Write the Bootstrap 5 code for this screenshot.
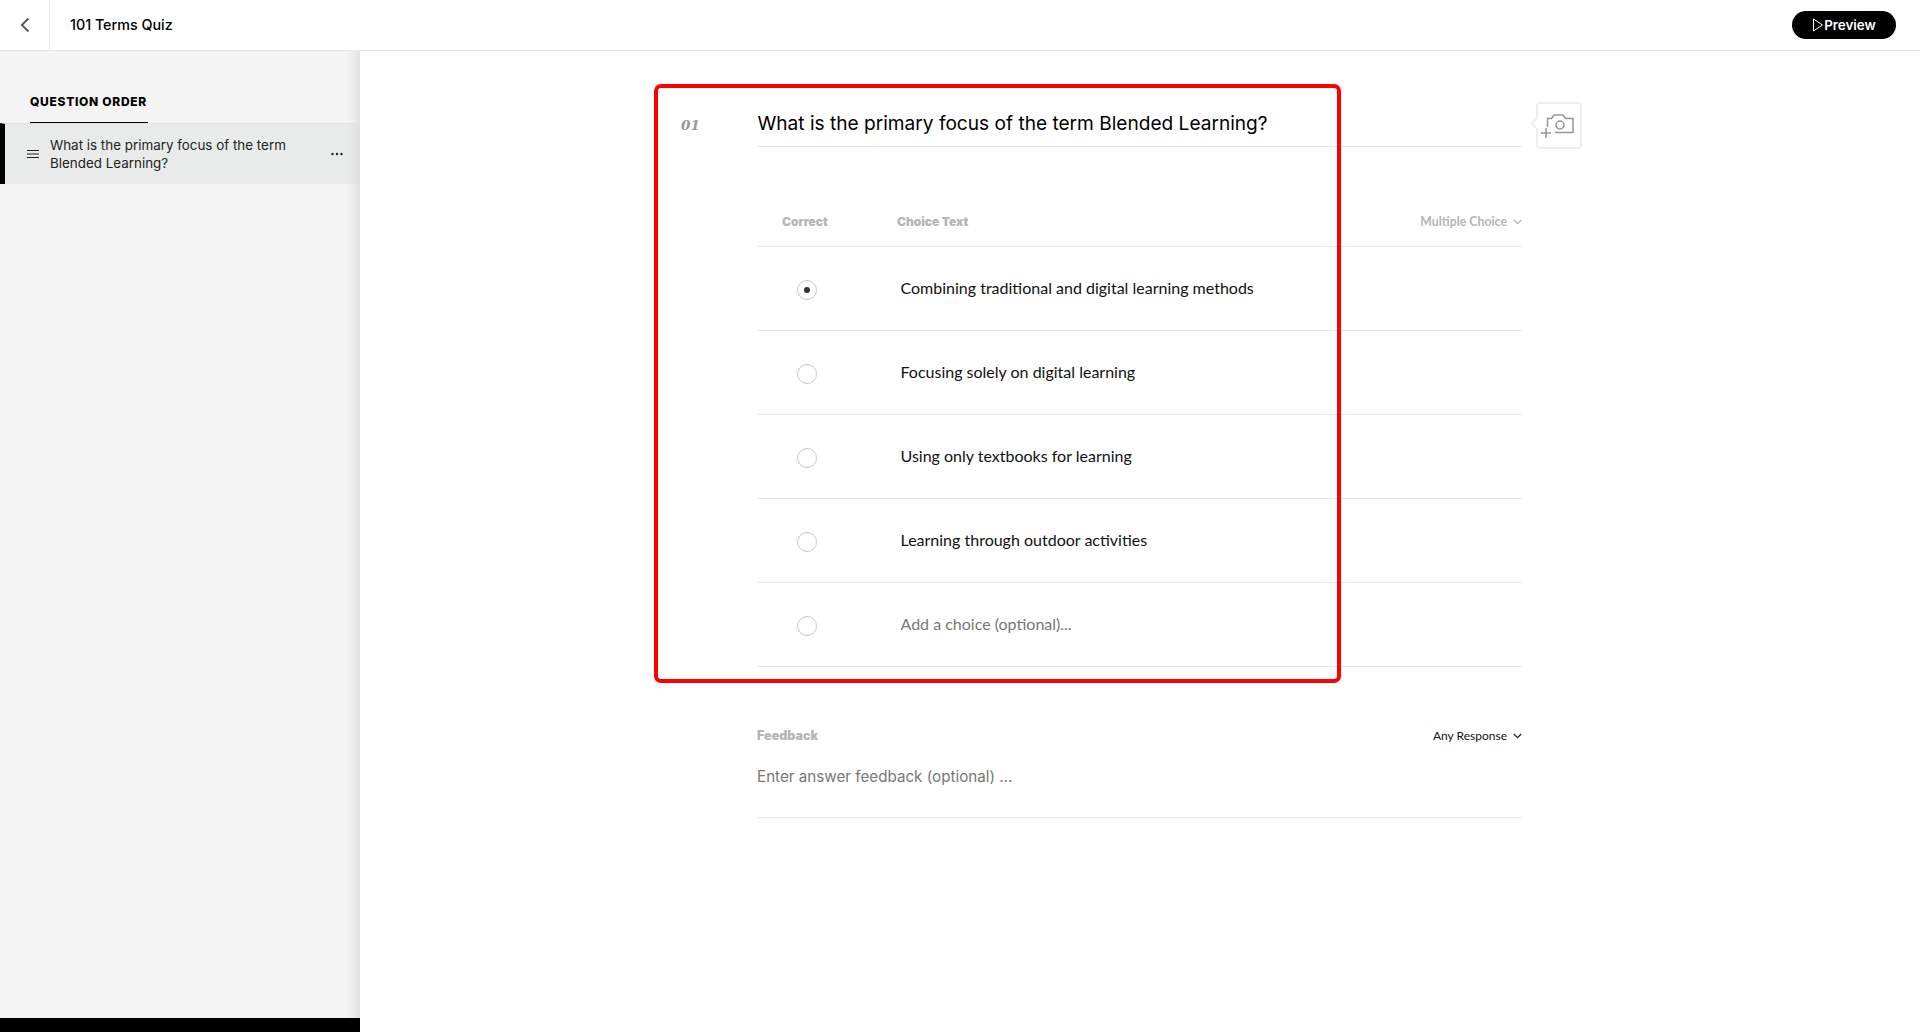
<!DOCTYPE html>
<html lang="en"><head><meta charset="utf-8"><title>101 Terms Quiz</title>
<link href="https://cdn.jsdelivr.net/npm/bootstrap@5.3.0/dist/css/bootstrap.min.css" rel="stylesheet">
<style>
html,body{height:100%;overflow:hidden}
body{font-family:Inter,"Liberation Sans",sans-serif;color:#000;background:#fff}
.shell{height:1032px}
.topbar{height:51px;border-bottom:1px solid #e9e9e9;flex:none}
.backcell{width:50px;height:50px;border-right:1px solid #e9e9e9;color:#555}
.quiz-title{font-size:14.3px;font-weight:500;margin-left:20px}
.preview-btn{width:104px;height:28px;border-radius:14px;background:#000;color:#fff;font-size:13.4px;font-weight:600;padding:2px 0 0;margin-right:24px;gap:0;line-height:1}
.preview-btn:hover{background:#000;color:#fff}
.preview-btn svg{margin-top:-2px}
.sidepanel{width:360px;background:#f4f4f4;flex:none;box-shadow:inset -14px 0 12px -10px #dcdcdc}
.side-head{font-size:12px;font-weight:800;letter-spacing:.7px;padding:44px 0 0 30px;height:72px}
.side-head span{display:block;width:118px;height:29px;border-bottom:2px solid #000;line-height:14px;white-space:nowrap}
.qitem{height:61px;background:#e9eaea;border-left:5px solid #000;border-top:1px solid #e2e2e2;box-shadow:inset -14px 0 12px -10px #dcdcdc;padding:0 17px 0 22px;font-size:13.4px;line-height:18px;color:#222}
.qitem-text{width:250px;margin-left:11px;margin-top:-1px}
.side-foot{height:14px;background:#000;width:360px;flex:none}
.workarea{position:relative;margin-left:-360px;padding-left:757px}
.redframe{position:absolute;left:654px;top:33px;width:687px;height:599px;border:4px solid #f00;border-radius:7px;pointer-events:none}
.qcol{width:765px;position:relative}
.qnum{position:absolute;left:-76px;top:65px;font-family:"DejaVu Serif","Liberation Serif",serif;font-style:italic;font-weight:700;font-size:13.5px;color:#999;line-height:18px}
.qtext{font-size:19.1px;line-height:24px;height:96px;padding-top:60px;padding-left:.5px;border-bottom:1px solid #e9e9e9;box-sizing:border-box}
.headrow{height:100px;border-bottom:1px solid #e9e9e9;padding-bottom:17px;color:#b5b5b5;font-size:12px;font-weight:900;line-height:14px}
.col-correct{width:140px;padding-left:25px;flex:none}
.col-choice{flex:1 1 auto}
.typepick{font-family:Lato,sans-serif;font-weight:700;color:#b5b5b5;font-size:12.3px;gap:6px}
.choice{height:84px;border-bottom:1px solid #e9e9e9;font-family:Lato,sans-serif;font-size:16px;color:#111}
.choice-label{margin-top:-2px}
.radiocell{width:143.500px;flex:none;padding-left:40px}
.radiodot{width:20px;height:20px;border:1px solid #c9c9c9;border-radius:50%;background:#fff;margin-top:2px}
.radiodot i{width:6px;height:6px;border-radius:50%;background:#333;display:block}
.ph{color:#777}
.fbhead{margin-top:61px;height:16px;font-size:12.500px;line-height:16px}
.fblabel{color:#b5b5b5;font-weight:900}
.anyresp{font-family:Lato,sans-serif;color:#111;font-size:12px;gap:6px}
.fbinput{height:70px;padding-top:19px;font-size:15.200px;line-height:20px;color:#777;border-bottom:1px solid #e9e9e9;box-sizing:border-box;margin-top:4px}
.cambox{position:absolute;left:779px;top:51px;width:46px;height:47px;border:2px solid #eee;border-radius:4px;background:#fff}
.cambox::before{content:"";position:absolute;left:-6px;top:15px;width:9px;height:9px;background:#fff;border-left:2px solid #eee;border-bottom:2px solid #eee;transform:rotate(45deg)}
.cambox svg{overflow:visible}
</style></head>
<body>
<div class="shell d-flex flex-column">
  <header class="topbar d-flex align-items-center">
    <div class="backcell d-flex align-items-center justify-content-center">
      <svg width="12" height="16" viewBox="0 0 12 16" fill="none" stroke="#555" stroke-width="1.8"><path d="M9.5 1.5 2.8 8l6.7 6.5"/></svg>
    </div>
    <div class="quiz-title">101 Terms Quiz</div>
    <button class="btn preview-btn d-flex align-items-center justify-content-center ms-auto" type="button">
      <svg width="12" height="14" viewBox="0 0 12 14" fill="none" stroke="#fff" stroke-width="1"><path d="M1.500 1v12l9-6z"/></svg>Preview
    </button>
  </header>
  <div class="d-flex flex-grow-1" style="min-height:0">
    <aside class="sidepanel d-flex flex-column">
      <div class="side-head"><span>QUESTION ORDER</span></div>
      <div class="qitem d-flex align-items-center">
        <svg class="flex-shrink-0" width="12" height="8" viewBox="0 0 12 8" stroke="#222" stroke-width="1"><path d="M0 .5h12M0 4h12M0 7.500h12"/></svg>
        <div class="qitem-text">What is the primary focus of the term Blended Learning?</div>
        <svg class="ms-auto flex-shrink-0" width="12" height="4" viewBox="0 0 12 4" fill="#222"><circle cx="1.500" cy="2" r="1.200"/><circle cx="6" cy="2" r="1.200"/><circle cx="10.500" cy="2" r="1.200"/></svg>
      </div>
      <div class="flex-grow-1"></div>
      <div class="side-foot"></div>
    </aside>
    <main class="workarea flex-grow-1">
      <div class="qcol">
        <div class="qnum">01</div>
        <div class="qtext">What is the primary focus of the term Blended Learning?</div>
        <div class="headrow d-flex align-items-end">
          <div class="col-correct">Correct</div>
          <div class="col-choice">Choice Text</div>
          <div class="typepick d-flex align-items-center">Multiple Choice
            <svg width="9" height="6" viewBox="0 0 9 6" fill="none" stroke="#b0b0b0" stroke-width="1.100"><path d="m.8 1 3.700 3.700L8.200 1"/></svg>
          </div>
        </div>
        <div class="choice d-flex align-items-center"><div class="radiocell"><div class="radiodot d-flex align-items-center justify-content-center"><i></i></div></div><div class="choice-label">Combining traditional and digital learning methods</div></div>
        <div class="choice d-flex align-items-center"><div class="radiocell"><div class="radiodot"></div></div><div class="choice-label">Focusing solely on digital learning</div></div>
        <div class="choice d-flex align-items-center"><div class="radiocell"><div class="radiodot"></div></div><div class="choice-label">Using only textbooks for learning</div></div>
        <div class="choice d-flex align-items-center"><div class="radiocell"><div class="radiodot"></div></div><div class="choice-label">Learning through outdoor activities</div></div>
        <div class="choice d-flex align-items-center"><div class="radiocell"><div class="radiodot"></div></div><div class="choice-label ph">Add a choice (optional)...</div></div>
        <div class="fbhead d-flex justify-content-between align-items-center">
          <div class="fblabel">Feedback</div>
          <div class="anyresp d-flex align-items-center">Any Response
            <svg width="9" height="6" viewBox="0 0 9 6" fill="none" stroke="#222" stroke-width="1.300"><path d="m.8 1 3.700 3.700L8.200 1"/></svg>
          </div>
        </div>
        <div class="fbinput">Enter answer feedback (optional) ...</div>
        <div class="cambox d-flex align-items-center justify-content-center">
          <svg width="34" height="28" viewBox="1 0 34 28" fill="none" stroke="#96969c" stroke-width="1.500"><path d="M6.500 15V6.500h4l2.500-3.500h9l2.500 3.500H32v14H14"/><circle cx="19" cy="13" r="4"/><path d="M0 21h10M5 16v10"/></svg>
        </div>
      </div>
      <div class="redframe"></div>
    </main>
  </div>
</div>
</body></html>
